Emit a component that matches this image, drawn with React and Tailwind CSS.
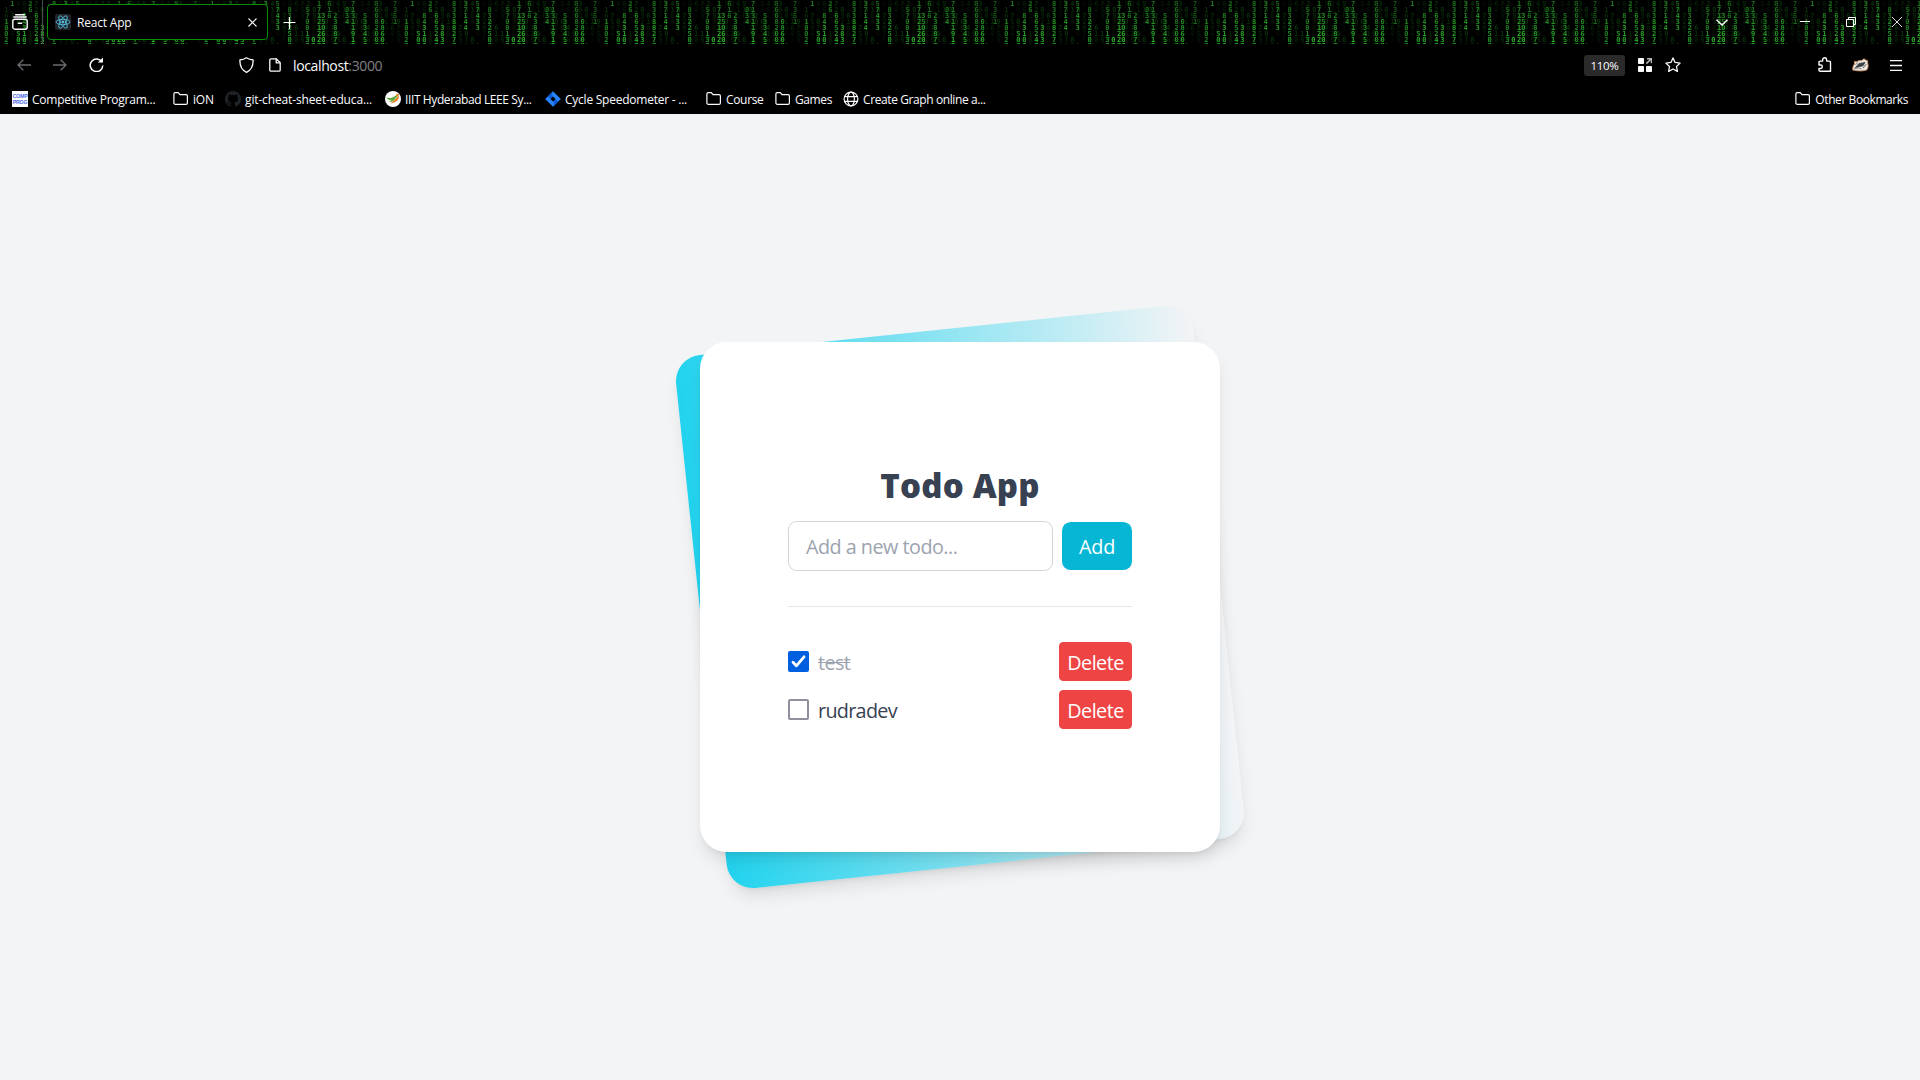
const COLUMNS = [
  [6.3, 3, "1002", 0.75], [12.3, 0, "1", 1], [18.3, 5, "50", 0.9], [24.3, 2, "84310", 0.9],
  [30.3, 0, "26", 0.8], [36.3, 2, "66524", 0.9], [42.3, 4, "383", 1], [54, 0, "8338827", 0.9],
  [65.7, 0, "37144", 0.95], [77.7, 0, "57433", 0.95], [89.7, 1, "832250", 0.85],
  [107.3, 1, "570813", 0.8], [113.3, 6, "0", 1], [119, 0, "1712122", 1], [123.3, 2, "35060", 1],
  [129.3, 0, "616", 0.85], [135.3, 2, "23887", 0.9], [147, 1, "034", 0.9], [153, 0, "7131191", 1],
  [165, 2, "53345", 0.9], [176.7, 0, "8608200", 0.8], [182.5, 3, "0860", 0.9], [195, 0, "7351", 0.7],
];

const DIM = "50718263940713582960417";
const ROWS = [0, 1, 2, 3, 4, 5, 6, 7];

function MatrixBackdrop() {
  return (
    <svg className="absolute inset-0 h-[44px] w-full" aria-hidden="true">
      <defs>
        <pattern id="rain" width="200" height="44" patternUnits="userSpaceOnUse">
          <g fontFamily="DejaVu Sans Mono" fontSize="7" textAnchor="middle" fontWeight="700">
            {Array.from({ length: 33 }, (_, i) =>
              ROWS.map((r) => (
                <text key={i + "-" + r} x={i * 6 + 6.3} y={6 + r * 6} fill="#0d5a10" opacity={((i * 7 + r * 5) % 6) * 0.1}>
                  {DIM[(i * 5 + r * 3) % DIM.length]}
                </text>
              ))
            )}
            {COLUMNS.map(([x, start, digits, o]) =>
              (start + digits.length === 7 ? digits + "7" : digits).split("").map((d, k) => (
                <text key={x + "-" + k} x={x} y={6 + (start + k) * 6} fill="#2cb82c" opacity={o * (0.62 + (start + k) * 0.055)}>
                  {d}
                </text>
              ))
            )}
          </g>
        </pattern>
      </defs>
      <rect width="100%" height="44" fill="url(#rain)" />
    </svg>
  );
}

function Folder() {
  return (
    <svg className="h-4 w-4 shrink-0" viewBox="0 0 16 16" fill="none" stroke="#fbfbfe" strokeWidth="1.2" strokeLinejoin="round">
      <path d="M.9 3.1c0-.8.6-1.4 1.4-1.4h3l1.7 2h6c.8 0 1.4.6 1.4 1.4v6.8c0 .8-.6 1.4-1.4 1.4H2.3c-.8 0-1.4-.6-1.4-1.4z" />
    </svg>
  );
}

function Comp() {
  return (
    <span className="flex h-4 w-4 shrink-0 flex-col items-center justify-center bg-white font-['Liberation_Sans'] text-[5.3px] leading-[6px] font-bold text-[#4a6cf0]">
      <span>COMP</span>
      <span>PROG</span>
    </span>
  );
}

function Github() {
  return (
    <svg className="h-4 w-4 shrink-0" viewBox="0 0 16 16" fill="#1f2226">
      <path d="M8 0C3.58 0 0 3.58 0 8c0 3.54 2.29 6.53 5.47 7.59.4.07.55-.17.55-.38 0-.19-.01-.82-.01-1.49-2.01.37-2.53-.49-2.69-.94-.09-.23-.48-.94-.82-1.13-.28-.15-.68-.52-.01-.53.63-.01 1.08.58 1.23.82.72 1.21 1.87.87 2.33.66.07-.52.28-.87.51-1.07-1.78-.2-3.64-.89-3.64-3.95 0-.87.31-1.59.82-2.15-.08-.2-.36-1.02.08-2.12 0 0 .67-.21 2.2.82a7.6 7.6 0 0 1 4 0c1.53-1.04 2.2-.82 2.2-.82.44 1.1.16 1.92.08 2.12.51.56.82 1.27.82 2.15 0 3.07-1.87 3.75-3.65 3.95.29.25.54.73.54 1.48 0 1.07-.01 1.93-.01 2.2 0 .21.15.46.55.38A8 8 0 0 0 16 8c0-4.42-3.58-8-8-8z" />
    </svg>
  );
}

function Iiit() {
  return (
    <svg className="h-4 w-4 shrink-0" viewBox="0 0 16 16">
      <circle cx="8" cy="8" r="8" fill="#fff" />
      <path d="M1.2 6.6c3 .9 5.5.5 8.6-1.4 1.6-1 3.4-2.6 4.6-2.2L9.8 8.6C8 10.7 5.6 11.5 3 10.6c2 0 2.8-.5 3.3-1.3C4 9.3 2.3 8.5 1.2 6.6z" fill="#5fa83a" />
      <path d="M13.6 4.4c1 2-.3 5-3.3 6.5-1.8.9-3.7 1-5.6 1.9 2.2-2 5.6-3.5 8.900-8.400z" fill="#ef7d22" />
      <circle cx="12.4" cy="4" r="1.3" fill="#ef7d22" />
    </svg>
  );
}

function Jira() {
  return (
    <svg className="h-4 w-4 shrink-0" viewBox="0 0 16 16">
      <path d="M8 .2 15.800 8 8 15.800.2 8z" fill="#2684ff" />
      <path d="M8 .2C6.500 2 6.500 4 8 5.500L5.500 8 2.800 5.400zM8 15.800c1.500-1.800 1.500-3.800 0-5.300L10.500 8l2.700 2.600z" fill="#0b5bd8" />
      <path d="M8 5.500 10.500 8 8 10.500 5.500 8z" fill="#000" />
    </svg>
  );
}

function Globe() {
  return (
    <svg className="h-4 w-4 shrink-0" viewBox="0 0 16 16" fill="none" stroke="#fbfbfe" strokeWidth="1.2">
      <circle cx="8" cy="8" r="6.9" />
      <ellipse cx="8" cy="8" rx="3.4" ry="6.9" />
      <path d="M1.5 5.700h13M1.500 10.300h13" />
    </svg>
  );
}

const BOOKMARKS = [
  { icon: <Comp />, label: "Competitive Program...", box: "w-[161px] tracking-[-0.23px]" },
  { icon: <Folder />, label: "iON", box: "w-[52px] tracking-[-0.2px]" },
  { icon: <Github />, label: "git-cheat-sheet-educa...", box: "w-[160px] tracking-[-0.14px]" },
  { icon: <Iiit />, label: "IIIT Hyderabad LEEE Sy...", box: "w-[160px] tracking-[-0.39px]" },
  { icon: <Jira />, label: "Cycle Speedometer - ...", box: "w-[161px] tracking-[-0.24px]" },
  { icon: <Folder />, label: "Course", box: "w-[69px] tracking-[-0.33px]" },
  { icon: <Folder />, label: "Games", box: "w-[68px] tracking-[-0.4px]" },
  { icon: <Globe />, label: "Create Graph online a...", box: "w-[160px] tracking-[-0.4px]" },
];

function TabStrip() {
  return (
    <div className="relative h-[44px] bg-black">
      <MatrixBackdrop />
      <div className="relative flex h-full">
        <div className="flex w-[43px] items-center border-r border-[#4a4f4a] pl-3">
          <svg className="h-4 w-4" viewBox="0 0 16 16" fill="none" stroke="#fbfbfe" strokeWidth="1.4" strokeLinecap="round">
            <rect x=".8" y="5.2" width="14.4" height="10" rx="2" />
            <path d="M1.800 3h12.400M3.600.7h8.800M6.300 9.200h3.400" />
          </svg>
        </div>
        <div className="mt-1 ml-1 flex h-9 w-[221px] items-center rounded-[4px] border border-[#0a8f0a] bg-black pl-[7px]">
          <svg className="h-4 w-4 shrink-0 rounded-[2px] bg-[#20232a]" viewBox="0 0 16 16" fill="none" stroke="#5ac8e8" strokeWidth=".8">
            <ellipse cx="8" cy="8" rx="7" ry="2.7" />
            <ellipse cx="8" cy="8" rx="7" ry="2.7" transform="rotate(60 8 8)" />
            <ellipse cx="8" cy="8" rx="7" ry="2.7" transform="rotate(120 8 8)" />
            <circle cx="8" cy="8" r="1.1" fill="#5ac8e8" />
          </svg>
          <span className="ml-[6px] pt-[2px] text-[12px] tracking-[-0.2px]">React App</span>
          <svg className="mr-[10px] ml-auto h-[9px] w-[9px]" viewBox="0 0 9 9" stroke="#fbfbfe" strokeWidth="1.1">
            <path d="M.5.5l8 8M8.500.5l-8 8" />
          </svg>
        </div>
        <svg className="mt-[17px] ml-[15px] h-[13px] w-[13px]" viewBox="0 0 13 13" stroke="#fbfbfe" strokeWidth="1.2">
          <path d="M6.500 0v12M.5 5.500h12" />
        </svg>
        <div className="ml-auto flex items-center">
          <svg className="mr-[72px] h-[7px] w-3" viewBox="0 0 12 7" fill="none" stroke="#fbfbfe" strokeWidth="1.4">
            <path d="M.5.7 6 6 11.500.7" />
          </svg>
          <svg className="mr-9 h-[10px] w-[10px]" viewBox="0 0 10 10" stroke="#fff">
            <path d="M0 4.500h10" />
          </svg>
          <svg className="mr-9 h-[10px] w-[10px]" viewBox="0 0 10 10" fill="none" stroke="#fff">
            <path d="M.5 2.500h7v7h-7zM2.500 2.500v-2h7v7h-2" />
          </svg>
          <svg className="mr-[18px] h-[10px] w-[10px]" viewBox="0 0 10 10" stroke="#fff" strokeWidth=".9">
            <path d="M0 0l10 10M10 0 0 10" />
          </svg>
        </div>
      </div>
    </div>
  );
}

function Toolbar() {
  return (
    <div className="flex h-[42px] items-center">
      <svg className="ml-[17px] h-3 w-[14px]" viewBox="0 0 14 12" fill="none" stroke="#6b6b70" strokeWidth="1.3">
        <path d="M14 6H1M6.300.7 1 6l5.300 5.300" />
      </svg>
      <svg className="ml-[22px] h-3 w-[14px]" viewBox="0 0 14 12" fill="none" stroke="#6b6b70" strokeWidth="1.3">
        <path d="M0 6h13M7.700.7 13 6l-5.300 5.300" />
      </svg>
      <svg className="mb-[2px] ml-[22px] h-[15px] w-[15px]" viewBox="0 0 15 15" fill="none" stroke="#fbfbfe" strokeWidth="1.5">
        <path d="M13 5.200A6.300 6.300 0 1 0 13.800 8.500" />
        <path d="M14 .4v5.200H8.800z" fill="#fbfbfe" stroke="none" />
      </svg>
      <svg className="mb-px ml-[135px] h-4 w-[15px]" viewBox="0 0 15 16" fill="none" stroke="#fbfbfe" strokeWidth="1.3" strokeLinejoin="round">
        <path d="M7.500.8c2 1.300 4.200 2 6.600 2.200.2 5.700-1.500 10-6.600 12.300C2.400 13 .7 8.700.9 3 3.300 2.800 5.500 2.100 7.500.8z" />
      </svg>
      <svg className="mb-px ml-[15px] h-[14px] w-3" viewBox="0 0 12 14" fill="none" stroke="#fbfbfe" strokeWidth="1.3" strokeLinejoin="round">
        <path d="M.8 2c0-.7.5-1.200 1.200-1.200h5.200l4 4V12c0 .7-.5 1.200-1.200 1.200H2c-.7 0-1.200-.5-1.200-1.200z" />
        <path d="M7.200.8v4h4" />
      </svg>
      <span className="ml-[12px] pt-px text-[14px] tracking-[-0.37px]">
        localhost<span className="text-[#808085]">:3000</span>
      </span>
      <div className="ml-auto flex items-center">
        <span className="flex h-[21px] w-[41px] items-center justify-center rounded-[3px] bg-[#2b2a2b] pt-px text-[11.5px] tracking-[-0.35px]">110%</span>
        <svg className="ml-[13px] h-[14px] w-[14px]" viewBox="0 0 14 14" fill="#fbfbfe">
          <rect width="6" height="6" rx=".8" />
          <rect y="8" width="6" height="6" rx=".8" />
          <rect x="8" y="8" width="6" height="6" rx=".8" />
          <path d="M9 .7h4.500v4.500M13.300.7 8.400 5.600" fill="none" stroke="#b8b8bc" strokeWidth="1.5" />
        </svg>
        <svg className="ml-[13px] h-4 w-4" viewBox="0 0 16 16" fill="none" stroke="#fbfbfe" strokeWidth="1.3" strokeLinejoin="round">
          <path d="M8 .9l2.100 4.500 5 .7-3.600 3.400.9 4.900L8 12l-4.400 2.400.9-4.900L.9 6.100l5-.7z" />
        </svg>
        <svg className="ml-[136px] h-4 w-4" viewBox="0 0 16 16" fill="none" stroke="#fbfbfe" strokeWidth="1.4" strokeLinejoin="round">
          <path d="M2 8V5.200c0-.7.400-1.100 1.100-1.100h2.500V2.800a2 2 0 0 1 4 0v1.300h2.700c.8 0 1.200.4 1.200 1.100v9H3.200C2.400 14.200 2 13.800 2 13v-1.500h1.600a1.700 1.700 0 0 0 0-3.500z" />
        </svg>
        <svg className="ml-[19px] h-[14px] w-[17px]" viewBox="0 0 17 14">
          <path d="M.7 12C.6 9.500 1.300 7.200 2.600 6L2.300 3.400l2.400.3C6.500 2.500 8 2.300 9.600 2.500L12 .8l2 1.400 1.500.4.300 3.100c.8 2.300.2 4.600-1.200 6.400-4.700 1.300-9.400 1-13.900-.1z" fill="#e9e5e0" stroke="#c98a5c" strokeWidth=".9" />
          <path d="M3.500 9.500 7 5.500l6-1-2 3.300-4 .9zM11 10l3.300-3.800" fill="#3a3f46" stroke="#3a3f46" strokeWidth=".8" />
          <path d="M2 11l4-1.200 3.500 1M3.500 6.500l2.500-2" fill="none" stroke="#77777c" strokeWidth=".9" />
        </svg>
        <svg className="mr-[18px] ml-[21px] h-[11px] w-3" viewBox="0 0 12 11" stroke="#fbfbfe" strokeWidth="1.3">
          <path d="M0 .7h12M0 5.500h12M0 10.300h12" />
        </svg>
      </div>
    </div>
  );
}

function BookmarksBar() {
  return (
    <div className="flex h-[28px] items-center pb-[2px] pl-3 text-[12px]">
      {BOOKMARKS.map((b) => (
        <div key={b.label} className={"flex shrink-0 items-center gap-1 " + b.box}>
          {b.icon}
          <span className="pt-[2px] whitespace-nowrap">{b.label}</span>
        </div>
      ))}
      <div className="mr-3 ml-auto flex items-center gap-1 tracking-[-0.42px]">
        <Folder />
        <span className="pt-[2px] whitespace-nowrap">Other Bookmarks</span>
      </div>
    </div>
  );
}

function TodoItem({ label, done }) {
  return (
    <li className="flex h-[39px] items-center">
      {done ? (
        <span className="flex h-[21px] w-[21px] items-center justify-center rounded-[2px] bg-[#0060df]">
          <svg className="h-[15px] w-[15px]" viewBox="0 0 15 15" fill="none" stroke="#fff" strokeWidth="2.8" strokeLinecap="round" strokeLinejoin="round">
            <path d="M2 8.200 5.400 11.800 13 2.800" />
          </svg>
        </span>
      ) : (
        <span className="h-[21px] w-[21px] rounded-[2px] border-2 border-[#8f8f9d] bg-white" />
      )}
      <span className={done ? "ml-[9px] pt-[2px] tracking-[-0.6px] text-[#9ca3af] line-through" : "ml-[9px] pt-[2px] tracking-[-0.7px] text-[#374151]"}>{label}</span>
      <button className="ml-auto flex h-[39px] w-[73px] items-center justify-center rounded-[4.4px] bg-[#ef4444] pt-[2px] tracking-[-0.55px] text-white">Delete</button>
    </li>
  );
}

function TodoCard() {
  return (
    <div className="relative h-[510px] w-[520px]">
      <div className="absolute inset-x-0 -inset-y-[13.2px] -rotate-6 rounded-[26.4px] bg-[linear-gradient(to_right,#22d3ee,rgba(34,211,238,0))] shadow-[0_11px_16.5px_-3.3px_rgba(0,0,0,0.1),0_4.4px_6.6px_-4.4px_rgba(0,0,0,0.1)]" />
      <div className="relative flex h-full flex-col rounded-[26.4px] bg-white px-[88px] pt-[122px] text-[19.8px] shadow-[0_11px_16.5px_-3.3px_rgba(0,0,0,0.1),0_4.4px_6.6px_-4.4px_rgba(0,0,0,0.1)]">
        <h1 className="h-[57px] text-center text-[33px] leading-[44px] font-extrabold tracking-[0.2px] text-[#374151]">Todo App</h1>
        <div className="flex h-[50px] items-center gap-[9px]">
          <div className="flex h-[50px] w-[265px] items-center rounded-[8.8px] border border-[#d1d5db] px-[17px] pt-[2px] tracking-[-0.52px] text-[#9ca3af]">
            Add a new todo...
          </div>
          <button className="flex h-12 w-[70px] items-center justify-center rounded-[8.8px] bg-[#06b6d4] pt-[2px] tracking-[-0.2px] text-white">Add</button>
        </div>
        <div className="mt-[35px] h-px bg-[#e5e7eb]" />
        <ul className="mt-[35px] flex flex-col gap-[9px]">
          <TodoItem label="test" done />
          <TodoItem label="rudradev" />
        </ul>
      </div>
    </div>
  );
}

export default function App() {
  return (
    <div className="h-[1080px] w-[1920px] overflow-hidden bg-[#f3f4f6] font-['Open_Sans',sans-serif]">
      <header className="h-[114px] bg-black text-[#fbfbfe]">
        <TabStrip />
        <Toolbar />
        <BookmarksBar />
      </header>
      <main className="flex h-[966px] items-center justify-center">
        <TodoCard />
      </main>
    </div>
  );
}
